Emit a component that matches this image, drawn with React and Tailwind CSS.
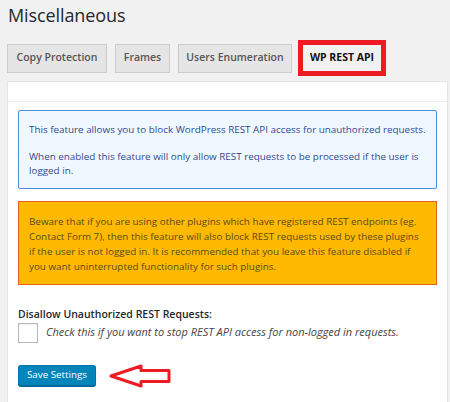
import React, { useState } from 'react';

const tabs = [
  { label: 'Copy Protection', width: 'w-[100px]' },
  { label: 'Frames', width: 'w-[55px]' },
  { label: 'Users Enumeration', width: 'w-[114px]' }
];

export default function App() {
  const [checked, setChecked] = useState(false);

  return (
    <div className="min-h-[402px] w-[450px] overflow-hidden bg-[#f1f1f1] pl-[7px] text-[#23282d] font-['Open_Sans',sans-serif]">
      <h1 className="pt-[1px] pl-[1px] text-[18px] leading-[28px] font-normal tracking-[-0.1px]">Miscellaneous</h1>

      <nav className="mt-[11px] flex h-[36px] items-center">
        {tabs.map((tab, i) => (
          <button
            key={tab.label}
            type="button"
            className={`${tab.width} ${i === 0 ? '' : 'ml-[8px]'} h-[29px] border border-[#cccccc] bg-[#e5e5e5] text-center text-[10.5px] font-semibold text-[#555555]`}
          >
            {tab.label}
          </button>
        ))}
        <button
          type="button"
          className="ml-[6px] h-[36px] w-[88px] border-[5px] border-[#ed1c24] bg-[#f1f1f1] text-center text-[10.5px] font-bold text-[#111111]"
        >
          WP REST API
        </button>
      </nav>

      <section className="mt-[5px] mr-[2px] border border-[#e5e5e5] bg-white pb-[20px]">
        <div className="h-[20px] border-b border-[#eeeeee]" />

        <div className="px-[10px] pt-[8px]">
          <div className="rounded-[2px] border border-[#4a8fd8] bg-[#f0f8ff] px-[10px] pt-[11px] pb-[10px] text-[9.85px] leading-[14.5px] text-[#2f4891]">
            <p>This feature allows you to block WordPress REST API access for unauthorized requests.</p>
            <p className="mt-[12px]">
              When enabled this feature will only allow REST requests to be processed if the user is
              <br />
              logged in.
            </p>
          </div>

          <div className="mt-[12px] border border-[#e3631b] bg-[#ffb900] px-[10px] pt-[12px] pb-[9px] text-[9.85px] leading-[15.3px] text-[#5b4a1c]">
            <p>
              Beware that if you are using other plugins which have registered REST endpoints (eg.
              <br />
              Contact Form 7), then this feature will also block REST requests used by these plugins
              <br />
              if the user is not logged in. It is recommended that you leave this feature disabled if
              <br />
              you want uninterrupted functionality for such plugins.
            </p>
          </div>

          <div className="mt-[22px]">
            <p className="text-[10.5px] leading-[15px] font-semibold text-[#23282d]">Disallow Unauthorized REST Requests:</p>
            <label className="mt-[1px] flex items-center gap-[8px]">
              <input
                type="checkbox"
                checked={checked}
                onChange={(event) => setChecked(event.target.checked)}
                className="h-[20px] w-[20px] appearance-none border border-[#b4b9be] bg-white shadow-[inset_0_1px_2px_rgba(0,0,0,0.07)]"
              />
              <span className="text-[11px] italic text-[#444444]">
                Check this if you want to stop REST API access for non-logged in requests.
              </span>
            </label>
          </div>

          <div className="mt-[21px] flex items-center">
            <button
              type="button"
              className="h-[21px] w-[78px] rounded-[3px] border border-[#0073aa] border-b-[#006799] bg-[#0085ba] text-[9.8px] text-white shadow-[0_1px_0_#006799]"
            >
              Save Settings
            </button>
            <svg className="ml-[13px]" width="62" height="24" viewBox="0 0 62 24" fill="none">
              <path
                d="M2 12 L32 2 L32 6.5 L60 6.5 L60 17.5 L32 17.5 L32 22 Z"
                stroke="#ed1c24"
                strokeWidth="3"
                strokeLinejoin="round"
                fill="white"
              />
            </svg>
          </div>
        </div>
      </section>
    </div>
  );
}
